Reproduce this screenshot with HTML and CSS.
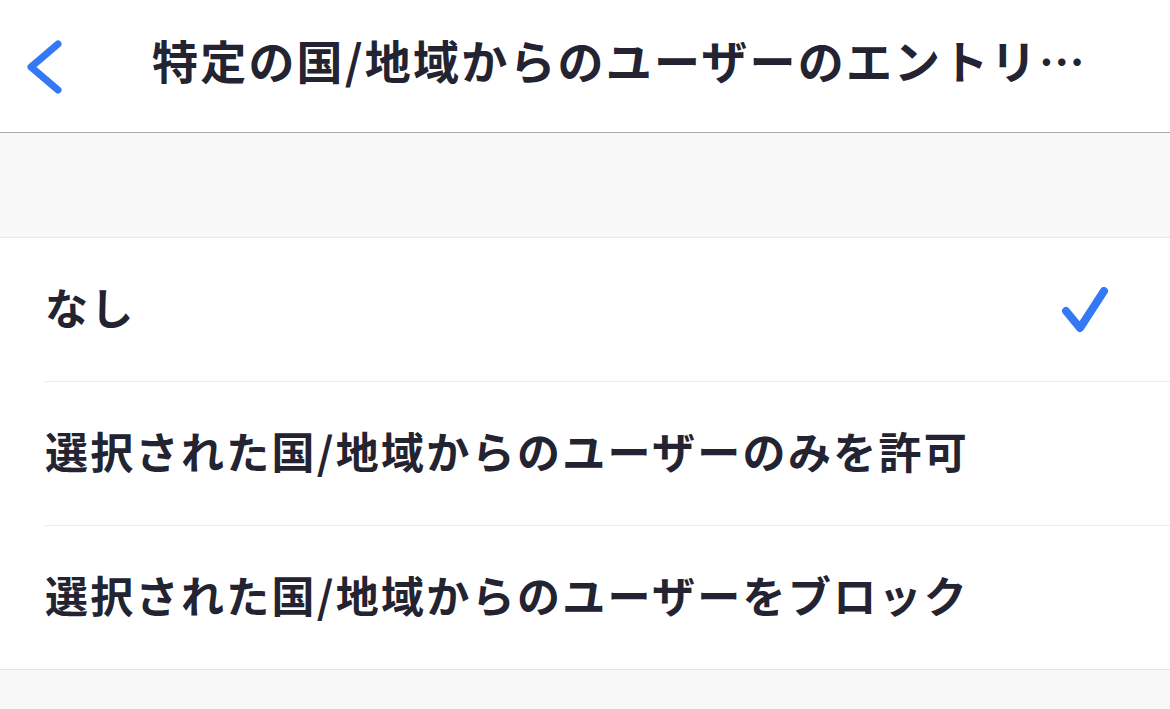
FILE: index.html
```html
<!DOCTYPE html>
<html lang="ja">
<head>
<meta charset="utf-8">
<link rel="stylesheet" href="styles.css">
</head>
<body>
<div class="screen">
  <header class="nav">
    <div class="back">
      <svg width="40" height="60" viewBox="0 0 40 60" class="back-icon">
        <polyline points="31,7 4,30 31,53" fill="none" stroke="#3478F6" stroke-width="7" stroke-linecap="round" stroke-linejoin="round"/>
      </svg>
    </div>
    <h1 class="title">特定の国/地域からのユーザーのエントリーを承認またはブロック</h1>
  </header>
  <div class="spacer"></div>
  <ul class="list">
    <li class="item">
      <span class="label">なし</span>
      <svg class="check" width="52" height="52" viewBox="0 0 52 52">
        <polyline points="6,24 20,41 44,4" fill="none" stroke="#3478F6" stroke-width="8" stroke-linecap="round" stroke-linejoin="round"/>
      </svg>
    </li>
    <li class="item">
      <span class="label">選択された国/地域からのユーザーのみを許可</span>
    </li>
    <li class="item">
      <span class="label">選択された国/地域からのユーザーをブロック</span>
    </li>
  </ul>
  <div class="footer"></div>
</div>
</body>
</html>
```

FILE: styles.css
```css
html, body {
  margin: 0;
  padding: 0;
}
body {
  font-family: "Noto Sans CJK JP", "Noto Sans", sans-serif;
  color: #232331;
  background: #f8f8f8;
}
.screen {
  width: 1170px;
  height: 709px;
  overflow: hidden;
  display: flex;
  flex-direction: column;
}
.nav {
  height: 132px;
  flex: 0 0 132px;
  background: #ffffff;
  border-bottom: 1px solid #ababab;
  display: flex;
  align-items: center;
}
.back {
  width: 152px;
  flex: 0 0 152px;
  height: 100%;
  display: flex;
  align-items: center;
}
.back-icon {
  margin-left: 27px;
  margin-top: 1px;
}
.title {
  margin: 0 0 14px 0;
  width: 950px;
  font-size: 46px;
  font-weight: 700;
  letter-spacing: 2.2px;
  white-space: nowrap;
  overflow: hidden;
  text-overflow: ellipsis;
  line-height: 100px;
}
.spacer {
  height: 104px;
  flex: 0 0 104px;
  border-bottom: 1px solid #e6e6e6;
}
.list {
  list-style: none;
  margin: 0;
  padding: 0 0 0 45px;
  background: #ffffff;
  border-bottom: 1px solid #e6e6e6;
}
.item {
  height: 143px;
  display: flex;
  align-items: center;
  justify-content: space-between;
  border-bottom: 1px solid #ececec;
  padding-right: 58px;
}
.item:last-child {
  border-bottom: none;
}
.label {
  font-size: 43px;
  font-weight: 700;
  letter-spacing: 2.3px;
  margin-bottom: 7px;
}
.check {
  margin-top: 6px;
}
.footer {
  flex: 1;
  background: #f8f8f8;
}
```
